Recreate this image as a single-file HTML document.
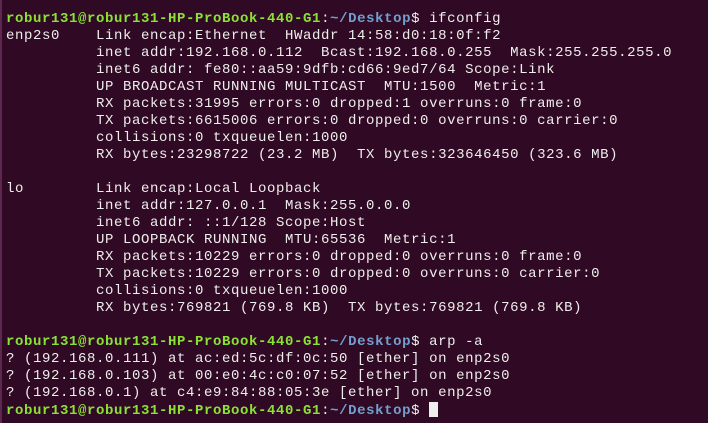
<!DOCTYPE html>
<html><head><meta charset="utf-8"><style>
html,body{margin:0;padding:0;}
body{width:708px;height:423px;background:#300a24;overflow:hidden;position:relative;}
.edge{position:absolute;left:0;top:0;width:2px;height:423px;background:#5e2750;}
pre{margin:0;position:absolute;left:6px;top:11px;font-family:"Liberation Mono",monospace;font-size:14px;letter-spacing:0.6px;line-height:17px;color:#eeeeec;white-space:pre;}
.g{color:#8ae234;font-weight:bold;}
.b{color:#729fcf;font-weight:bold;}
.cur{display:inline-block;width:9px;height:15px;background:#eeeeec;vertical-align:-3px;}
</style></head><body><div class="edge"></div><pre><span class="g">robur131@robur131-HP-ProBook-440-G1</span>:<span class="b">~/Desktop</span>$ ifconfig
enp2s0    Link encap:Ethernet  HWaddr 14:58:d0:18:0f:f2  
          inet addr:192.168.0.112  Bcast:192.168.0.255  Mask:255.255.255.0
          inet6 addr: fe80::aa59:9dfb:cd66:9ed7/64 Scope:Link
          UP BROADCAST RUNNING MULTICAST  MTU:1500  Metric:1
          RX packets:31995 errors:0 dropped:1 overruns:0 frame:0
          TX packets:6615006 errors:0 dropped:0 overruns:0 carrier:0
          collisions:0 txqueuelen:1000 
          RX bytes:23298722 (23.2 MB)  TX bytes:323646450 (323.6 MB)

lo        Link encap:Local Loopback  
          inet addr:127.0.0.1  Mask:255.0.0.0
          inet6 addr: ::1/128 Scope:Host
          UP LOOPBACK RUNNING  MTU:65536  Metric:1
          RX packets:10229 errors:0 dropped:0 overruns:0 frame:0
          TX packets:10229 errors:0 dropped:0 overruns:0 carrier:0
          collisions:0 txqueuelen:1000 
          RX bytes:769821 (769.8 KB)  TX bytes:769821 (769.8 KB)

<span class="g">robur131@robur131-HP-ProBook-440-G1</span>:<span class="b">~/Desktop</span>$ arp -a
? (192.168.0.111) at ac:ed:5c:df:0c:50 [ether] on enp2s0
? (192.168.0.103) at 00:e0:4c:c0:07:52 [ether] on enp2s0
? (192.168.0.1) at c4:e9:84:88:05:3e [ether] on enp2s0
<span class="g">robur131@robur131-HP-ProBook-440-G1</span>:<span class="b">~/Desktop</span>$ <span class="cur"></span></pre></body></html>
